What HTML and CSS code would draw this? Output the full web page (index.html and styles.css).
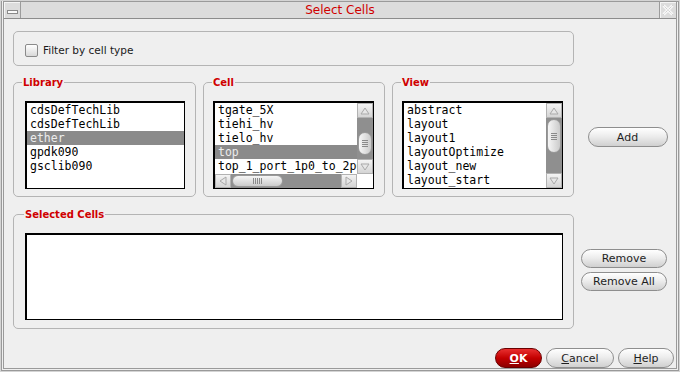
FILE: index.html
```html
<!DOCTYPE html>
<html lang="en">
  <head>
    <meta charset="UTF-8" />
    <title>Select Cells</title>
    <link rel="stylesheet" href="styles.css">
  </head>
  <body>
    <div class="window">
      <div class="frame">
        <!-- Window title bar -->
        <div class="titlebar">
          <div class="tb-btn"><span class="tb-min"></span></div>
          <div class="title">Select Cells</div>
          <div class="tb-btn tb-close">
            <svg width="12" height="12" viewBox="0 0 12 12">
              <path d="M1.5 1.5 L10.5 10.5 M10.5 1.5 L1.5 10.5" stroke="#f8f8f8" stroke-width="3" />
              <path d="M1.5 1.5 L10.5 10.5 M10.5 1.5 L1.5 10.5" stroke="#bcbcbc" stroke-width="1" stroke-dasharray="1 1" />
            </svg>
          </div>
        </div>

        <div class="dialog">
          <!-- Filter -->
          <div class="filter">
            <span class="check"></span>
            <span>Filter by cell type</span>
          </div>

          <!-- Library / Cell / View pickers -->
          <div class="pickers">
            <fieldset class="group group-lib">
              <legend>Library</legend>
              <div class="listbox listbox-lib">
                <div class="item">cdsDefTechLib</div>
                <div class="item">cdsDefTechLib</div>
                <div class="item sel">ether</div>
                <div class="item">gpdk090</div>
                <div class="item">gsclib090</div>
              </div>
            </fieldset>

            <fieldset class="group group-cell">
              <legend>Cell</legend>
              <div class="listbox listbox-scroll listbox-both">
                <div class="rows">
                  <div class="item">tgate_5X</div>
                  <div class="item">tiehi_hv</div>
                  <div class="item">tielo_hv</div>
                  <div class="item sel">top</div>
                  <div class="item">top_1_port_1p0_to_2p0</div>
                </div>
                <div class="vscroll">
                  <div class="arrow">
                    <svg width="10" height="8" viewBox="0 0 10 8"><polygon points="1,7 5,1 9,7" fill="#e6e6e6" stroke="#a9a9a9" /></svg>
                  </div>
                  <div class="track">
                    <div class="vthumb vthumb-cell"><span class="grip-v"></span></div>
                  </div>
                  <div class="arrow">
                    <svg width="10" height="8" viewBox="0 0 10 8"><polygon points="1,1 9,1 5,7" fill="#e6e6e6" stroke="#a9a9a9" /></svg>
                  </div>
                </div>
                <div class="hscroll">
                  <div class="arrow arrow-h">
                    <svg width="8" height="10" viewBox="0 0 8 10"><polygon points="7,1 7,9 1,5" fill="#e6e6e6" stroke="#a9a9a9" /></svg>
                  </div>
                  <div class="track">
                    <div class="hthumb"><span class="grip-h"></span></div>
                  </div>
                  <div class="arrow arrow-h">
                    <svg width="8" height="10" viewBox="0 0 8 10"><polygon points="1,1 7,5 1,9" fill="#e6e6e6" stroke="#a9a9a9" /></svg>
                  </div>
                </div>
                <div class="corner"></div>
              </div>
            </fieldset>

            <fieldset class="group group-view">
              <legend>View</legend>
              <div class="listbox listbox-scroll">
                <div class="rows">
                  <div class="item">abstract</div>
                  <div class="item">layout</div>
                  <div class="item">layout1</div>
                  <div class="item">layoutOptimize</div>
                  <div class="item">layout_new</div>
                  <div class="item">layout_start</div>
                </div>
                <div class="vscroll">
                  <div class="arrow">
                    <svg width="10" height="8" viewBox="0 0 10 8"><polygon points="1,7 5,1 9,7" fill="#e6e6e6" stroke="#a9a9a9" /></svg>
                  </div>
                  <div class="track">
                    <div class="vthumb vthumb-view"><span class="grip-v"></span></div>
                  </div>
                  <div class="arrow">
                    <svg width="10" height="8" viewBox="0 0 10 8"><polygon points="1,1 9,1 5,7" fill="#e6e6e6" stroke="#a9a9a9" /></svg>
                  </div>
                </div>
              </div>
            </fieldset>

            <div class="side side-add">
              <button class="btn btn-add">Add</button>
            </div>
          </div>

          <!-- Selected cells -->
          <div class="selected-row">
            <fieldset class="group group-selected">
              <legend>Selected Cells</legend>
              <div class="listbox listbox-selected"></div>
            </fieldset>
            <div class="side side-remove">
              <button class="btn btn-remove">Remove</button>
              <button class="btn btn-remove">Remove All</button>
            </div>
          </div>

          <!-- Dialog buttons -->
          <div class="footer">
            <button class="btn btn-ok"><u>O</u>K</button>
            <button class="btn btn-cancel"><u>C</u>ancel</button>
            <button class="btn btn-help"><u>H</u>elp</button>
          </div>
        </div>
      </div>
    </div>
  </body>
</html>
```

FILE: styles.css
```css
* {
  margin: 0;
  padding: 0;
  box-sizing: border-box;
}

body {
  width: 680px;
  height: 372px;
  overflow: hidden;
  background: #efefef;
  font-family: "DejaVu Sans", sans-serif;
  font-size: 11px;
  color: #1a1a1a;
}

.window {
  width: 680px;
  height: 372px;
  border: 1px solid #d4d4d4;
  background: #efefef;
}

.frame {
  height: 100%;
  display: flex;
  flex-direction: column;
  border-style: double;
  border-width: 1px 3px 3px 3px;
  border-color: #9a9a9a;
}

/* title bar */
.titlebar {
  height: 17px;
  display: flex;
  background: #dcdcdc;
  border-bottom: 1px solid #8c8c8c;
}

.tb-btn {
  width: 17px;
  display: flex;
  align-items: center;
  justify-content: center;
  border-right: 1px solid #9c9c9c;
  box-shadow: inset 1px 1px 0 #f4f4f4;
}

.tb-close {
  border-right: none;
  border-left: 1px solid #9c9c9c;
}

.tb-min {
  width: 11px;
  height: 4px;
  margin-top: 3px;
  border: 1px solid #8a8a8a;
  background: #fafafa;
}

.title {
  flex: 1;
  text-align: center;
  color: #d00000;
  font-size: 12px;
  line-height: 16px;
}

/* dialog body */
.dialog {
  flex: 1;
  display: flex;
  flex-direction: column;
  padding: 12px 2px 0 9px;
}

.filter {
  width: 561px;
  height: 35px;
  display: flex;
  align-items: center;
  gap: 5px;
  padding: 3px 0 0 11px;
  border: 1px solid #b4b4b4;
  border-radius: 5px;
  font-size: 10.5px;
}

.check {
  width: 13px;
  height: 13px;
  border: 1px solid #8a8a8a;
  border-radius: 2px;
  background: linear-gradient(#ffffff, #d8d8d8);
}

.pickers {
  display: flex;
  gap: 7px;
  margin-top: 10px;
}

.selected-row {
  display: flex;
  margin-top: 11px;
}

.group {
  min-width: 0;
  border: 1px solid #b4b4b4;
  border-radius: 5px;
  padding: 12px 10px 7px 9px;
}

.group legend {
  margin-left: -1px;
  padding: 0 1px;
  line-height: 13px;
  font-size: 10px;
  font-weight: bold;
  color: #d00000;
}

.group-lib {
  width: 183px;
}

.group-cell,
.group-view {
  width: 182px;
}

.group-selected {
  width: 561px;
  padding: 12px 10px 8px 11px;
}

/* list boxes */
.listbox {
  height: 88px;
  overflow: hidden;
  background: #ffffff;
  border: 1px solid #000000;
  border-width: 2px 1px 1px 2px;
}

.listbox-lib {
  margin-left: 2px;
}

.listbox-selected {
  height: 87px;
}

.listbox-scroll {
  display: grid;
  grid-template-columns: 1fr 16px;
}

.listbox-both {
  grid-template-rows: 1fr 14px;
}

.rows {
  overflow: hidden;
}

.item {
  height: 14px;
  line-height: 14px;
  padding-left: 3px;
  white-space: nowrap;
  font-family: "DejaVu Sans Mono", monospace;
  font-size: 11.5px;
  color: #000000;
}

.item.sel {
  background: #8a8a8a;
  color: #ececec;
}

/* scroll bars */
.vscroll {
  display: flex;
  flex-direction: column;
  background: #8f8f8f;
}

.hscroll {
  display: flex;
  background: #8f8f8f;
}

.track {
  flex: 1;
}

.hscroll .track {
  display: flex;
  align-items: center;
}

.arrow {
  flex: none;
  height: 15px;
  display: flex;
  align-items: center;
  justify-content: center;
  border: 1px solid #b2b2b2;
  background: linear-gradient(#f4f4f4, #d4d4d4);
}

.arrow-h {
  width: 16px;
  height: auto;
}

.vthumb {
  display: flex;
  align-items: center;
  justify-content: center;
  margin: 0 1px;
  border: 1px solid #9a9a9a;
  border-radius: 7px;
  background: linear-gradient(to right, #f6f6f6, #cbcbcb);
}

.vthumb-cell {
  margin-top: 14px;
  height: 23px;
}

.vthumb-view {
  margin-top: 1px;
  height: 34px;
}

.grip-v {
  width: 6px;
  height: 7px;
  background: repeating-linear-gradient(#8a8a8a 0 1px, transparent 1px 2px);
}

.hthumb {
  width: 51px;
  height: 12px;
  margin-left: 1px;
  display: flex;
  align-items: center;
  justify-content: center;
  border: 1px solid #9a9a9a;
  border-radius: 6px;
  background: linear-gradient(#f6f6f6, #cbcbcb);
}

.grip-h {
  width: 9px;
  height: 6px;
  background: repeating-linear-gradient(to right, #8a8a8a 0 1px, transparent 1px 2px);
}

.corner {
  background: #ffffff;
}

/* buttons */
.side {
  flex: 1;
  display: flex;
  flex-direction: column;
  align-items: center;
}

.side-add {
  padding-top: 51px;
}

.side-remove {
  padding-top: 41px;
  gap: 4px;
}

.btn {
  height: 20px;
  border: 1px solid #8e8e8e;
  border-radius: 10px;
  background: linear-gradient(#ffffff, #ededed 45%, #d0d0d0);
  font-family: "DejaVu Sans", sans-serif;
  font-size: 11px;
  color: #1e1e1e;
}

.btn u {
  text-decoration: underline;
}

.btn-add {
  width: 80px;
}

.btn-remove {
  width: 86px;
  height: 19px;
}

.footer {
  display: flex;
  justify-content: flex-end;
  gap: 4px;
  margin-top: 19px;
}

.btn-ok {
  width: 47px;
  border-color: #6a0000;
  background: linear-gradient(#e83030, #c40000 50%, #8c0000);
  color: #ffffff;
  font-weight: bold;
}

.btn-cancel {
  width: 68px;
}

.btn-help {
  width: 56px;
}
```
